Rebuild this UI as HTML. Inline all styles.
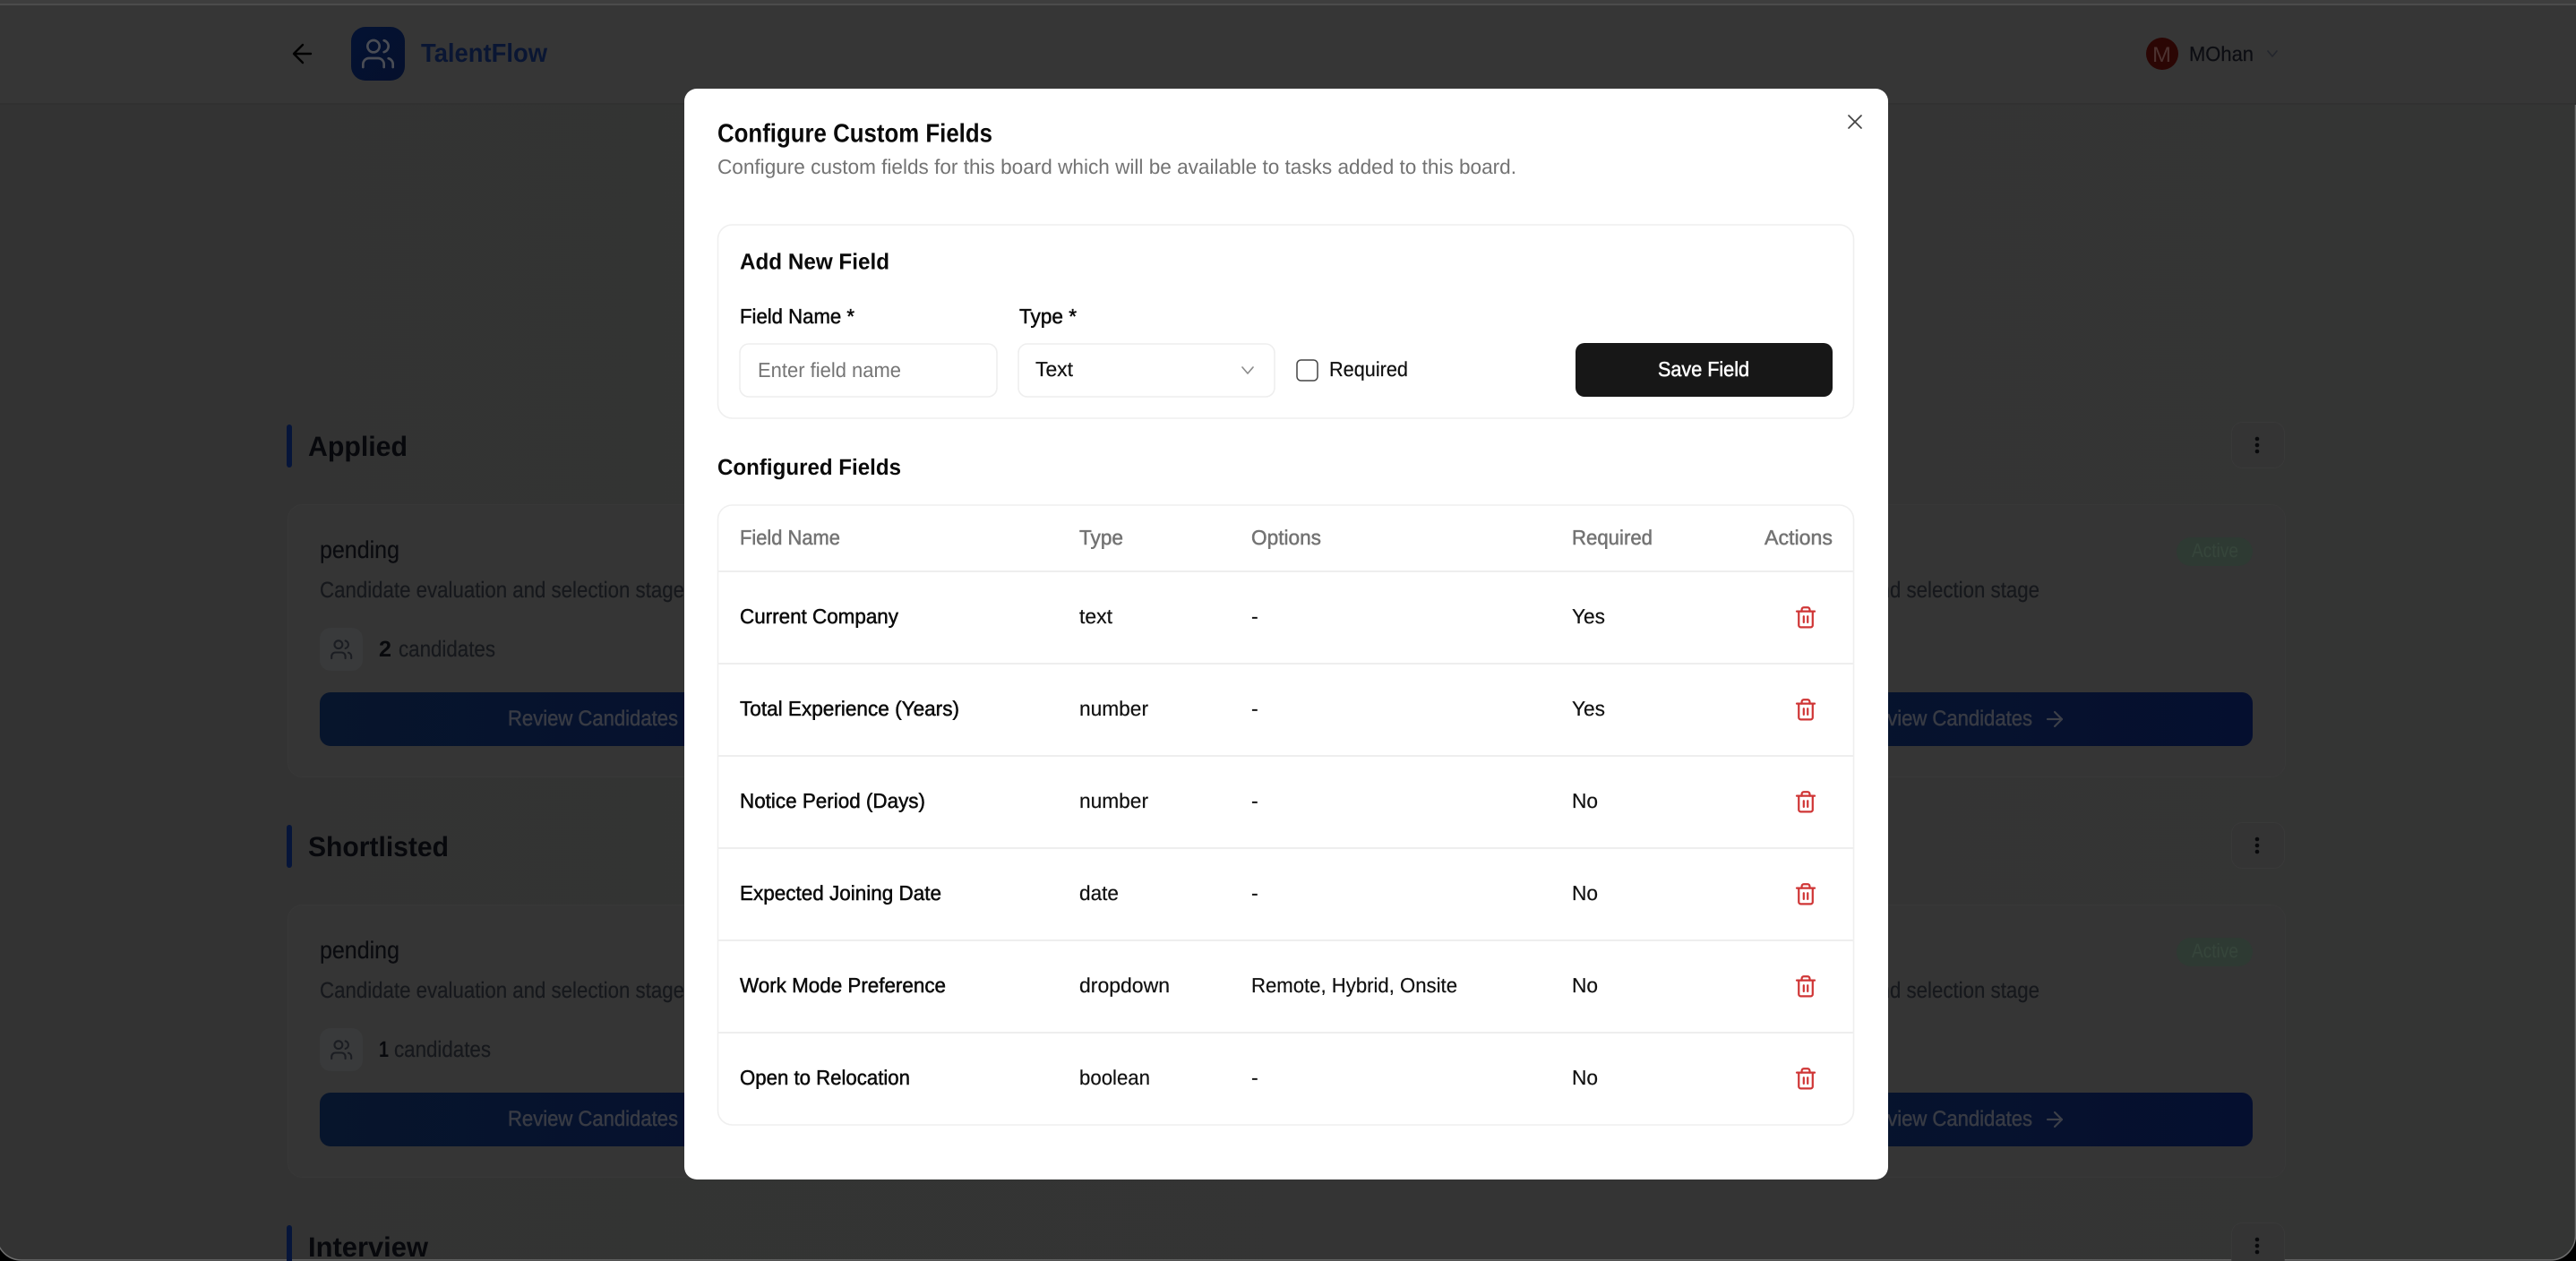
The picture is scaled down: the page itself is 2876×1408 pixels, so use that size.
<!DOCTYPE html>
<html lang="en">
<head>
<meta charset="utf-8">
<title>TalentFlow - Configure Custom Fields</title>
<style>
html,body{margin:0;padding:0;width:2876px;height:1408px;overflow:hidden;background:#000}
svg{display:block}
text{font-family:"Liberation Sans",Arial,sans-serif;white-space:pre;text-rendering:geometricPrecision}
.b{font-weight:700}
.m{stroke:currentColor;stroke-width:.5px}
.l{stroke:currentColor;stroke-width:.2px}
.ico{fill:none;stroke-linecap:round;stroke-linejoin:round}
</style>
</head>
<body>
<svg xmlns="http://www.w3.org/2000/svg" width="2876" height="1408" viewBox="0 0 2876 1408">
<defs>
<linearGradient id="bg" x1="0" x2="1" y1="0" y2="0"><stop offset="0" stop-color="#333333"/><stop offset="1" stop-color="#343534"/></linearGradient>
<linearGradient id="btn" x1="0" x2="1" y1="0" y2="0"><stop offset="0" stop-color="#07152c"/><stop offset="1" stop-color="#050f2f"/></linearGradient>
<linearGradient id="logo" x1="0" x2="1" y1="0" y2="1"><stop offset="0" stop-color="#041233"/><stop offset="1" stop-color="#05102c"/></linearGradient>
<g id="users"><path d="M16 21v-2a4 4 0 0 0-4-4H6a4 4 0 0 0-4 4v2"/><circle cx="9" cy="7" r="4"/><path d="M22 21v-2a4 4 0 0 0-3-3.87"/><path d="M16 3.13a4 4 0 0 1 0 7.75"/></g>
<g id="trash"><path d="M3 6h18"/><path d="M19 6v14c0 1-1 2-2 2H7c-1 0-2-1-2-2V6"/><path d="M8 6V4c0-1 1-2 2-2h4c1 0 2 1 2 2v2"/><path d="M10 11v6"/><path d="M14 11v6"/></g>
</defs>

<!-- window -->
<rect x="-4" y="-40" width="2879.5" height="1447" rx="28" fill="url(#bg)" stroke="#6e6e6e" stroke-width="1.5"/>
<rect x="0" y="0" width="2876" height="115" fill="#363636"/>
<rect x="0" y="115" width="2876" height="2" fill="#313131"/>
<rect x="0" y="0" width="2876" height="4" fill="#3e3e3e"/>
<rect x="0" y="4" width="2876" height="2" fill="#4c4c4c"/>

<!-- header -->
<g class="ico" stroke="#000" stroke-width="2.4"><path d="M347 60h-18"/><path d="M338 50l-10 10 10 10"/></g>
<rect x="392" y="30" width="60" height="60" rx="16" fill="url(#logo)"/>
<g class="ico" stroke="#4a4d55" stroke-width="1.6" transform="translate(402 40) scale(1.667)"><use href="#users"/></g>
<text x="470" y="69" class="b" font-size="29" fill="#0a1633" textLength="141" lengthAdjust="spacingAndGlyphs">TalentFlow</text>
<circle cx="2414" cy="60" r="18" fill="#2b0604"/>
<text x="2403" y="69" font-size="24" fill="#4c3230" textLength="21" lengthAdjust="spacingAndGlyphs">M</text>
<text x="2444" y="68" class="l" font-size="23" fill="#0c0d12" color="#0c0d12" textLength="72" lengthAdjust="spacingAndGlyphs">MOhan</text>
<path class="ico" d="M2532 57l5 6 5-6" stroke="#23262d" stroke-width="1.6"/>

<!-- section 1 -->
<rect x="320" y="474" width="6" height="48" rx="3" fill="#06153a"/>
<text x="344" y="509" class="b" font-size="31" fill="#07080c" textLength="111" lengthAdjust="spacingAndGlyphs">Applied</text>
<rect x="2491.5" y="471.5" width="59" height="51" rx="12" fill="#343434" stroke="#393939"/>
<circle cx="2520" cy="490" r="2.3" fill="#08090b"/><circle cx="2520" cy="497" r="2.3" fill="#08090b"/><circle cx="2520" cy="504" r="2.3" fill="#08090b"/>
<rect x="321.5" y="563.5" width="2230" height="304" rx="16" fill="#353535" stroke="#383838"/>
<text x="357" y="623" class="l" font-size="27" fill="#0a0b0f" color="#0a0b0f" textLength="89" lengthAdjust="spacingAndGlyphs">pending</text>
<text x="357" y="667" class="l" font-size="25" fill="#16181c" color="#16181c" textLength="407" lengthAdjust="spacingAndGlyphs">Candidate evaluation and selection stage</text>
<rect x="357" y="701" width="48" height="48" rx="12" fill="#393a3b"/>
<g class="ico" stroke="#1b1d22" stroke-width="1.9" transform="translate(368 712) scale(1.1)"><use href="#users"/></g>
<text x="423" y="733" class="b" font-size="25" fill="#08090c" textLength="14" lengthAdjust="spacingAndGlyphs">2</text>
<text x="445" y="733" class="l" font-size="25" fill="#16181c" color="#16181c" textLength="108" lengthAdjust="spacingAndGlyphs">candidates</text>
<rect x="357" y="773" width="640" height="60" rx="12" fill="url(#btn)"/>
<text x="567" y="810" class="m" font-size="24" fill="#383b44" color="#383b44" textLength="190" lengthAdjust="spacingAndGlyphs">Review Candidates</text>
<rect x="2430" y="600" width="85" height="32" rx="16" fill="#2e3a33"/>
<text x="2447" y="622" class="l" font-size="22" fill="#36453b" color="#36453b" textLength="52" lengthAdjust="spacingAndGlyphs">Active</text>
<text x="1870" y="667" class="l" font-size="25" fill="#16181c" color="#16181c" textLength="407" lengthAdjust="spacingAndGlyphs">Candidate evaluation and selection stage</text>
<rect x="1870" y="773" width="645" height="60" rx="12" fill="url(#btn)"/>
<text x="2079" y="810" class="m" font-size="24" fill="#383b44" color="#383b44" textLength="190" lengthAdjust="spacingAndGlyphs">Review Candidates</text>
<g class="ico" stroke="#3c3f48" stroke-width="2.2"><path d="M2286 803h16"/><path d="M2294 795l8 8-8 8"/></g>

<!-- section 2 -->
<rect x="320" y="921" width="6" height="48" rx="3" fill="#06153a"/>
<text x="344" y="956" class="b" font-size="31" fill="#07080c" textLength="157" lengthAdjust="spacingAndGlyphs">Shortlisted</text>
<rect x="2491.5" y="918.5" width="59" height="51" rx="12" fill="#343434" stroke="#393939"/>
<circle cx="2520" cy="937" r="2.3" fill="#08090b"/><circle cx="2520" cy="944" r="2.3" fill="#08090b"/><circle cx="2520" cy="951" r="2.3" fill="#08090b"/>
<rect x="321.5" y="1010.5" width="2230" height="304" rx="16" fill="#353535" stroke="#383838"/>
<text x="357" y="1070" class="l" font-size="27" fill="#0a0b0f" color="#0a0b0f" textLength="89" lengthAdjust="spacingAndGlyphs">pending</text>
<text x="357" y="1114" class="l" font-size="25" fill="#16181c" color="#16181c" textLength="407" lengthAdjust="spacingAndGlyphs">Candidate evaluation and selection stage</text>
<rect x="357" y="1148" width="48" height="48" rx="12" fill="#393a3b"/>
<g class="ico" stroke="#1b1d22" stroke-width="1.9" transform="translate(368 1159) scale(1.1)"><use href="#users"/></g>
<text x="423" y="1180" class="b" font-size="25" fill="#08090c" textLength="11" lengthAdjust="spacingAndGlyphs">1</text>
<text x="440" y="1180" class="l" font-size="25" fill="#16181c" color="#16181c" textLength="108" lengthAdjust="spacingAndGlyphs">candidates</text>
<rect x="357" y="1220" width="640" height="60" rx="12" fill="url(#btn)"/>
<text x="567" y="1257" class="m" font-size="24" fill="#383b44" color="#383b44" textLength="190" lengthAdjust="spacingAndGlyphs">Review Candidates</text>
<rect x="2430" y="1047" width="85" height="32" rx="16" fill="#2e3a33"/>
<text x="2447" y="1069" class="l" font-size="22" fill="#36453b" color="#36453b" textLength="52" lengthAdjust="spacingAndGlyphs">Active</text>
<text x="1870" y="1114" class="l" font-size="25" fill="#16181c" color="#16181c" textLength="407" lengthAdjust="spacingAndGlyphs">Candidate evaluation and selection stage</text>
<rect x="1870" y="1220" width="645" height="60" rx="12" fill="url(#btn)"/>
<text x="2079" y="1257" class="m" font-size="24" fill="#383b44" color="#383b44" textLength="190" lengthAdjust="spacingAndGlyphs">Review Candidates</text>
<g class="ico" stroke="#3c3f48" stroke-width="2.2"><path d="M2286 1250h16"/><path d="M2294 1242l8 8-8 8"/></g>

<!-- section 3 -->
<rect x="320" y="1368" width="6" height="48" rx="3" fill="#06153a"/>
<text x="344" y="1403" class="b" font-size="31" fill="#07080c" textLength="134" lengthAdjust="spacingAndGlyphs">Interview</text>
<rect x="2491.5" y="1365.5" width="59" height="51" rx="12" fill="#343434" stroke="#393939"/>
<circle cx="2520" cy="1384" r="2.3" fill="#08090b"/><circle cx="2520" cy="1391" r="2.3" fill="#08090b"/><circle cx="2520" cy="1398" r="2.3" fill="#08090b"/>

<!-- modal -->
<rect x="764" y="99" width="1344" height="1218" rx="14" fill="#ffffff"/>
<text x="801" y="158.5" class="b" font-size="29" fill="#0a0a0a" textLength="307" lengthAdjust="spacingAndGlyphs">Configure Custom Fields</text>
<text x="801" y="194" font-size="23" fill="#737373" textLength="892" lengthAdjust="spacingAndGlyphs">Configure custom fields for this board which will be available to tasks added to this board.</text>
<g class="ico" stroke="#444444" stroke-width="1.7"><path d="M2064 129l14 14"/><path d="M2078 129l-14 14"/></g>

<rect x="801.5" y="251" width="1268" height="216" rx="16" fill="#fff" stroke="#efefef" stroke-width="1.6"/>
<text x="826" y="300.5" class="b" font-size="25" fill="#0a0a0a" textLength="167" lengthAdjust="spacingAndGlyphs">Add New Field</text>
<text x="826" y="361" class="m" font-size="23" fill="#0a0a0a" color="#0a0a0a" textLength="128" lengthAdjust="spacingAndGlyphs">Field Name *</text>
<text x="1138" y="361" class="m" font-size="23" fill="#0a0a0a" color="#0a0a0a" textLength="64" lengthAdjust="spacingAndGlyphs">Type *</text>
<rect x="826" y="384" width="287" height="59" rx="10" fill="#fff" stroke="#eeeeee" stroke-width="1.6"/>
<text x="846" y="421" font-size="23" fill="#757575" textLength="160" lengthAdjust="spacingAndGlyphs">Enter field name</text>
<rect x="1137" y="384" width="286" height="59" rx="10" fill="#fff" stroke="#eeeeee" stroke-width="1.6"/>
<text x="1156" y="420" class="l" font-size="23" fill="#111111" color="#111111" textLength="42" lengthAdjust="spacingAndGlyphs">Text</text>
<path class="ico" d="M1387 410l6 7 6-7" stroke="#8a8a8a" stroke-width="1.6"/>
<rect x="1448" y="402" width="23" height="23" rx="4.5" fill="#fff" stroke="#444444" stroke-width="1.5"/>
<text x="1484" y="420" class="l" font-size="23" fill="#0f0f0f" color="#0f0f0f" textLength="88" lengthAdjust="spacingAndGlyphs">Required</text>
<rect x="1759" y="383" width="287" height="60" rx="10" fill="#171717"/>
<text x="1851" y="420" class="m" font-size="23" fill="#fff" color="#fff" textLength="102" lengthAdjust="spacingAndGlyphs">Save Field</text>

<text x="801" y="530" class="b" font-size="25" fill="#0a0a0a" textLength="205" lengthAdjust="spacingAndGlyphs">Configured Fields</text>

<rect x="801.5" y="564" width="1268" height="692" rx="16" fill="#fff" stroke="#efefef" stroke-width="1.6"/>
<g fill="#eeeeee">
<rect x="802" y="637" width="1267" height="2"/><rect x="802" y="740" width="1267" height="2"/><rect x="802" y="843" width="1267" height="2"/><rect x="802" y="946" width="1267" height="2"/><rect x="802" y="1049" width="1267" height="2"/><rect x="802" y="1152" width="1267" height="2"/>
</g>
<g font-size="23" fill="#737373" color="#737373" class="m">
<text x="826" y="608" textLength="112" lengthAdjust="spacingAndGlyphs">Field Name</text>
<text x="1205" y="608" textLength="49" lengthAdjust="spacingAndGlyphs">Type</text>
<text x="1397" y="608" textLength="78" lengthAdjust="spacingAndGlyphs">Options</text>
<text x="1755" y="608" textLength="90" lengthAdjust="spacingAndGlyphs">Required</text>
<text x="1970" y="608" textLength="76" lengthAdjust="spacingAndGlyphs">Actions</text>
</g>
<g font-size="23" fill="#0a0a0a" color="#0a0a0a" class="m">
<text x="826" y="696" textLength="177" lengthAdjust="spacingAndGlyphs">Current Company</text>
<text x="826" y="799" textLength="245" lengthAdjust="spacingAndGlyphs">Total Experience (Years)</text>
<text x="826" y="902" textLength="207" lengthAdjust="spacingAndGlyphs">Notice Period (Days)</text>
<text x="826" y="1005" textLength="225" lengthAdjust="spacingAndGlyphs">Expected Joining Date</text>
<text x="826" y="1108" textLength="230" lengthAdjust="spacingAndGlyphs">Work Mode Preference</text>
<text x="826" y="1211" textLength="190" lengthAdjust="spacingAndGlyphs">Open to Relocation</text>
</g>
<g font-size="23" fill="#111111" color="#111111" class="l">
<text x="1205" y="696" textLength="37" lengthAdjust="spacingAndGlyphs">text</text>
<text x="1205" y="799" textLength="77" lengthAdjust="spacingAndGlyphs">number</text>
<text x="1205" y="902" textLength="77" lengthAdjust="spacingAndGlyphs">number</text>
<text x="1205" y="1005" textLength="44" lengthAdjust="spacingAndGlyphs">date</text>
<text x="1205" y="1108" textLength="101" lengthAdjust="spacingAndGlyphs">dropdown</text>
<text x="1205" y="1211" textLength="79" lengthAdjust="spacingAndGlyphs">boolean</text>
<text x="1397" y="696">-</text>
<text x="1397" y="799">-</text>
<text x="1397" y="902">-</text>
<text x="1397" y="1005">-</text>
<text x="1397" y="1108" textLength="230" lengthAdjust="spacingAndGlyphs">Remote, Hybrid, Onsite</text>
<text x="1397" y="1211">-</text>
<text x="1755" y="696" textLength="37" lengthAdjust="spacingAndGlyphs">Yes</text>
<text x="1755" y="799" textLength="37" lengthAdjust="spacingAndGlyphs">Yes</text>
<text x="1755" y="902" textLength="29" lengthAdjust="spacingAndGlyphs">No</text>
<text x="1755" y="1005" textLength="29" lengthAdjust="spacingAndGlyphs">No</text>
<text x="1755" y="1108" textLength="29" lengthAdjust="spacingAndGlyphs">No</text>
<text x="1755" y="1211" textLength="29" lengthAdjust="spacingAndGlyphs">No</text>
</g>
<g class="ico" stroke="#cf3535" stroke-width="2">
<g transform="translate(2002.7 676) scale(1.11)"><use href="#trash"/></g>
<g transform="translate(2002.7 779) scale(1.11)"><use href="#trash"/></g>
<g transform="translate(2002.7 882) scale(1.11)"><use href="#trash"/></g>
<g transform="translate(2002.7 985) scale(1.11)"><use href="#trash"/></g>
<g transform="translate(2002.7 1088) scale(1.11)"><use href="#trash"/></g>
<g transform="translate(2002.7 1191) scale(1.11)"><use href="#trash"/></g>
</g>
</svg>
</body>
</html>
